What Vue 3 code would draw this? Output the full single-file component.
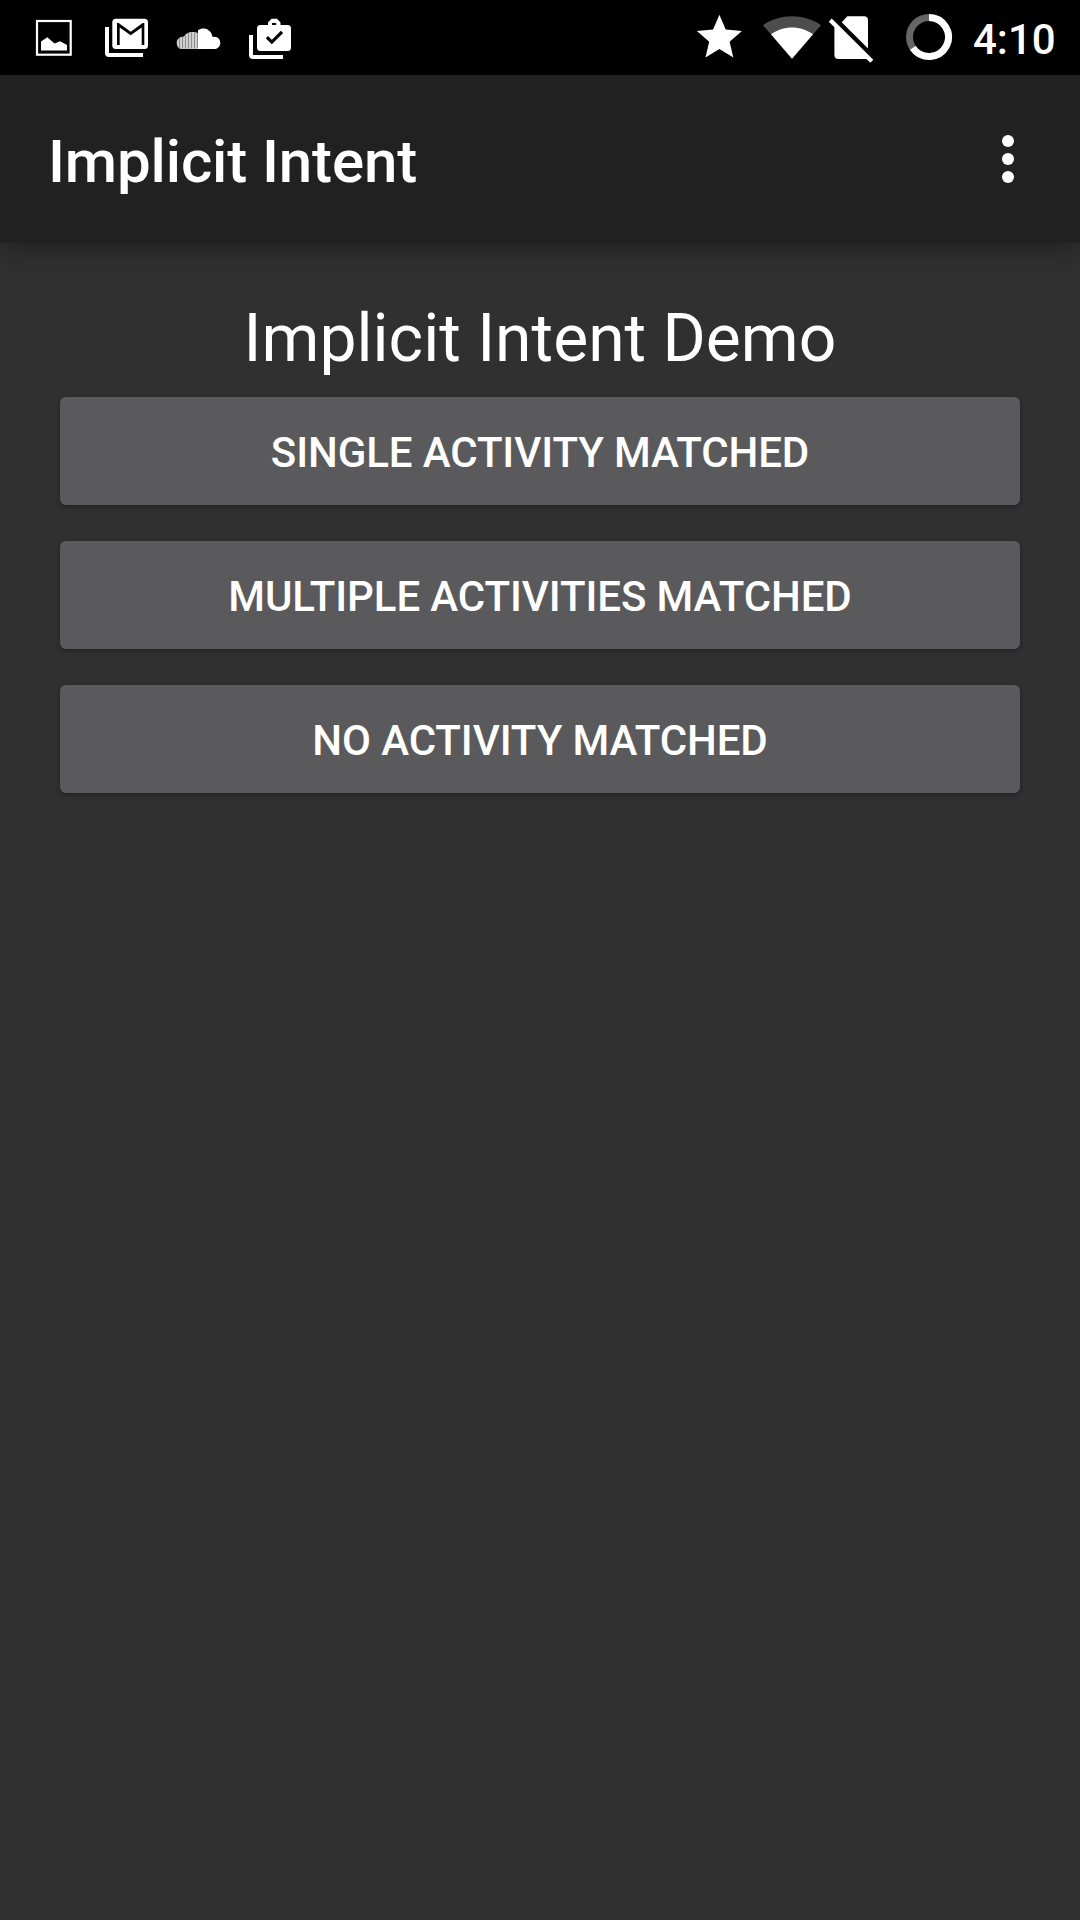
<script setup>
const buttons = [
  'Single activity matched',
  'Multiple activities matched',
  'No activity matched',
]
const stripes = [
  { x: 179.5, top: 38 },
  { x: 182.5, top: 37 },
  { x: 185.5, top: 35.5 },
  { x: 188.5, top: 33 },
  { x: 191.5, top: 32.5 },
  { x: 194.5, top: 33 },
  { x: 197.5, top: 33 },
]
</script>

<template>
  <div class="screen">
    <header class="status-bar">
      <div class="notifications">
        <svg width="72" height="75" viewBox="18 0 72 75">
          <rect x="37" y="21" width="33.7" height="33.7" fill="none" stroke="#fff" stroke-width="2.2" />
          <path d="M41 50.4V41.5L47.3 37.2 54.5 43.6 60 41.2 67 45V50.4Z" fill="#fff" />
        </svg>
        <svg width="72" height="75" viewBox="90 0 72 75">
          <path d="M105 27h4v26h34v4h-34a4 4 0 0 1-4-4z" fill="#fff" />
          <rect x="112.3" y="18.7" width="35.7" height="30.4" rx="3.6" fill="#fff" />
          <path d="M117 45V22.9h1.6L130.7 31.8 142.7 22.9H144.3V45H141.7V27.6L130.7 35.3 119.7 27.6V45Z" fill="#000" />
        </svg>
        <svg width="72" height="75" viewBox="162 0 72 75">
          <path d="M198 49V30.300C200 29 202 28.400 204 28.600 208.500 29 212 32.500 212.500 37 216.800 35.700 220.300 39 220.300 42.900 220.300 46.400 217.500 49 214 49Z" fill="#fff" />
          <path d="M198 49H181C178.500 48.500 176.700 46 176.700 43 176.700 39.500 179 36.500 184 36.500 185.500 33.500 188.500 32 192 32 194 32 196 32 198 33Z" fill="#cfcfcf" />
          <path v-for="s in stripes" :key="s.x" :d="`M${s.x} ${s.top}V48.5`" stroke="#8c8c8c" stroke-width="1" />
        </svg>
        <svg width="72" height="75" viewBox="234 0 72 75">
          <path d="M249 35h4v20h30v4h-30a4 4 0 0 1-4-4z" fill="#fff" />
          <path fill-rule="evenodd" d="M260.500 25H268V22.500L271.500 18.700H277L280.500 22.500V25H287.500A3.500 3.500 0 0 1 291 28.500V47.500A3.500 3.500 0 0 1 287.500 51H260.500A3.500 3.500 0 0 1 257 47.500V28.500A3.500 3.500 0 0 1 260.500 25ZM272 23V25H276.200V23Z" fill="#fff" />
          <path d="M266.900 37.200 271.800 42.100 282 31.900" fill="none" stroke="#000" stroke-width="3.2" />
        </svg>
      </div>
      <div class="system">
        <svg width="72" height="75" viewBox="684 0 72 75">
          <path transform="translate(692.4 10.2) scale(2.25)" d="M12 17.27 18.18 21l-1.64-7.03L22 9.24l-7.19-.61L12 2 9.19 8.63 2 9.24l5.46 4.73L5.82 21z" fill="#fff" />
        </svg>
        <svg width="70" height="75" viewBox="756 0 70 75">
          <path d="M792 58.700 763 25.300C771.500 19.200 781.500 16.300 792 16.300S812.500 19.200 821 25.300Z" fill="#4d4d4d" />
          <path d="M792 58.700 771 34.300C777 30 784.500 27.500 792 27.500S807 30 813 34.300Z" fill="#fff" />
        </svg>
        <svg width="74" height="75" viewBox="826 0 74 75">
          <path d="M841.700 22.200 847.300 16.300H864A4 4 0 0 1 868 20.300V48.600Z" fill="#fff" />
          <path d="M831.700 18.600 873.300 59.800 870.300 62.700 866.400 59H838.400A4 4 0 0 1 834.400 55V27.300L828.800 21.700Z" fill="#fff" />
        </svg>
        <svg width="72" height="75" viewBox="900 0 72 75">
          <circle cx="929" cy="37" r="19.5" fill="none" stroke="#666" stroke-width="7" />
          <path d="M929 17.5A19.5 19.5 0 1 1 912.83 47.9" fill="none" stroke="#fff" stroke-width="7" />
        </svg>
        <span class="clock">4:10</span>
      </div>
    </header>

    <div class="app-bar">
      <h1 class="title">Implicit Intent</h1>
      <svg class="overflow" width="36" height="60" viewBox="990 129 36 60" fill="#fff">
        <circle cx="1008" cy="141" r="6" />
        <circle cx="1008" cy="159" r="6" />
        <circle cx="1008" cy="177" r="6" />
      </svg>
    </div>

    <main class="content">
      <h2 class="heading">Implicit Intent Demo</h2>
      <button v-for="label in buttons" :key="label" class="action">{{ label }}</button>
    </main>
  </div>
</template>

<style>
body {
  margin: 0;
  background: #303030;
}
</style>

<style scoped>
.screen {
  display: flex;
  flex-direction: column;
  width: 1080px;
  height: 1920px;
  overflow: hidden;
  background: #303030;
  color: #fff;
  font-family: Roboto, sans-serif;
}

.status-bar {
  display: flex;
  justify-content: space-between;
  height: 75px;
  flex: none;
  padding: 0 24px 0 18px;
  background: #000;
}

.notifications,
.system {
  display: flex;
}

svg {
  display: block;
  flex: none;
}

.clock {
  width: 83px;
  margin: 15px 0 0 1px;
  font-size: 42px;
  font-weight: 500;
  line-height: 49px;
  white-space: nowrap;
}

.app-bar {
  display: flex;
  align-items: center;
  justify-content: space-between;
  box-sizing: border-box;
  height: 168px;
  flex: none;
  padding: 0 54px 0 48px;
  background: #212121;
  box-shadow: 0 6px 24px rgba(0, 0, 0, 0.32);
}

.title {
  margin: 0;
  padding-top: 5px;
  font-size: 60px;
  font-weight: 500;
  line-height: 71px;
  letter-spacing: -0.13px;
}

.content {
  display: flex;
  flex-direction: column;
  padding: 57px 60px 48px;
}

.heading {
  margin: 0 0 20px;
  font-size: 66px;
  font-weight: 400;
  line-height: 77px;
  text-align: center;
}

.action {
  box-sizing: border-box;
  height: 108px;
  margin: 0 0 36px;
  padding: 31px 0 28px;
  border: 0;
  border-radius: 6px;
  background: #5a5a5c;
  box-shadow: 0 2px 4px rgba(0, 0, 0, 0.3);
  color: #fff;
  font: 500 42px/49px Roboto, sans-serif;
  letter-spacing: -0.1px;
  text-transform: uppercase;
}
</style>
